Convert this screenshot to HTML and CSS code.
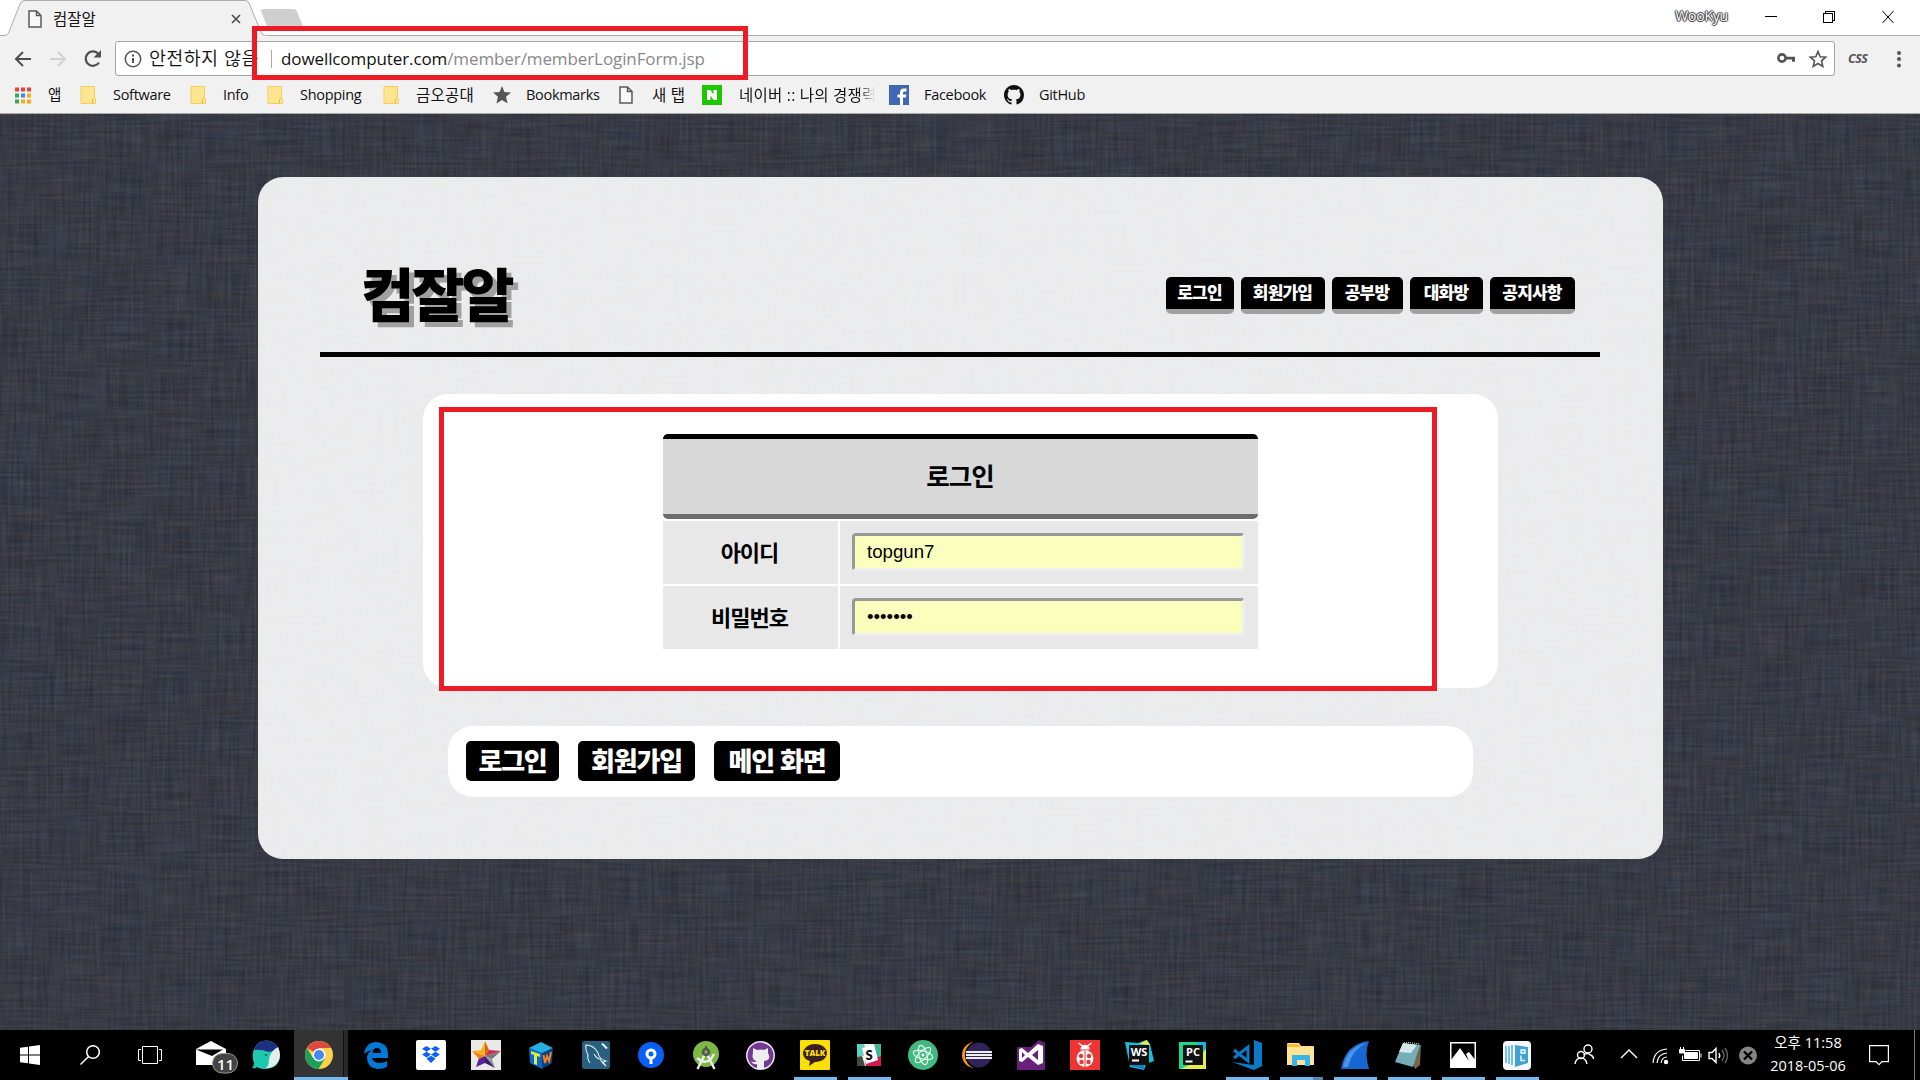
FILE: index.html
```html
<!DOCTYPE html>
<html lang="ko">
<head>
<meta charset="utf-8">
<title>컴잘알</title>
<link rel="stylesheet" href="styles.css">
</head>
<body>
<svg class="defs" width="0" height="0" aria-hidden="true">
  <symbol id="octocat" viewBox="0 0 16 16"><path d="M8 0C3.58 0 0 3.58 0 8c0 3.54 2.29 6.53 5.47 7.59.4.07.55-.17.55-.38 0-.19-.01-.82-.01-1.49-2.01.37-2.53-.49-2.69-.94-.09-.23-.48-.94-.82-1.13-.28-.15-.68-.52-.01-.53.63-.01 1.08.58 1.23.82.72 1.21 1.87.87 2.33.66.07-.52.28-.87.51-1.07-1.78-.2-3.64-.89-3.64-3.95 0-.87.31-1.59.82-2.15-.08-.2-.36-1.02.08-2.12 0 0 .67-.21 2.2.82.64-.18 1.32-.27 2-.27s1.36.09 2 .27c1.53-1.04 2.2-.82 2.2-.82.44 1.1.16 1.92.08 2.12.51.56.82 1.27.82 2.15 0 3.07-1.87 3.75-3.65 3.95.29.25.54.73.54 1.48 0 1.07-.01 1.93-.01 2.2 0 .21.15.46.55.38A8 8 0 0 0 16 8c0-4.42-3.58-8-8-8z"/></symbol>
  <symbol id="folder" viewBox="0 0 16 18"><path d="M1 .5h13.5v11.500l1 1v4.500H1z" fill="#ffe58f" stroke="#f3cf62"/><path d="M12.500 17.500v-4l1.500-1.500" fill="none" stroke="#e9b93a"/></symbol>
  <symbol id="doc" viewBox="0 0 14 18"><path d="M1 1h7.500L13 5.500V17H1zM8.500 1v4.500H13" fill="#fff" fill-opacity=".5" stroke="#5a5a5a" stroke-width="1.500"/></symbol>
</svg>

<header class="browser">
  <div class="tabs">
    <svg class="tab-shape" width="1920" height="36" viewBox="0 0 1920 36">
      <path d="M0 35.500H5Q8 35 9 32L20 4Q21 .5 25 .5H245Q248 .5 249 3L261 32Q262 35.500 266 35.500H1920V37H0z" fill="#f1f1f1" stroke="#acacac"/>
      <path d="M264 9H293Q296 9 297 11L303 27H270Q267 27 266 24L261 11Q261 9 264 9z" fill="#cfcfcf"/>
    </svg>
    <div class="tab">
      <svg width="14" height="18"><use href="#doc"/></svg>
      <span>컴잘알</span>
      <svg class="tab-close" width="10" height="10" viewBox="0 0 10 10"><path d="M1 1l8 8M9 1L1 9" stroke="#4c4c4c" stroke-width="1.700"/></svg>
    </div>
    <span class="profile">WooKyu</span>
    <svg class="win" width="130" height="14" viewBox="0 0 130 14" fill="none" stroke="#000" shape-rendering="crispEdges"><path d="M0 6.500h12M58.500 3.500h9v9h-9zM60.500 3V1.500h9v9H68"/><path d="M117.500 1l11 12M128.500 1l-11 12" shape-rendering="auto"/></svg>
  </div>
  <div class="toolbar">
    <svg class="nav-icons" width="90" height="20" viewBox="0 0 90 20" fill="none" stroke-width="2">
      <path d="M17 10H2M9 3L2 10l7 7" stroke="#4f4f4f"/>
      <path d="M36 10h15M44 3l7 7-7 7" stroke="#d2d2d2"/>
      <path d="M85 13.500A7.200 7.200 0 1 1 84 4.500" stroke="#4f4f4f" stroke-width="2.300"/><path d="M87 1v7.500h-7.500z" fill="#4f4f4f"/>
    </svg>
    <div class="address">
      <svg width="18" height="18" viewBox="0 0 18 18"><circle cx="9" cy="9" r="7.700" fill="none" stroke="#555" stroke-width="1.500"/><path d="M9 8v5M9 4.500v2" stroke="#555" stroke-width="2"/></svg>
      <span class="insecure">안전하지 않음</span>
      <i class="divider"></i>
      <span class="url">dowellcomputer.com<em>/member/memberLoginForm.jsp</em></span>
      <svg class="addr-icons" width="52" height="18" viewBox="0 0 52 18"><circle cx="6" cy="8" r="3.600" fill="none" stroke="#555" stroke-width="2.600"/><path d="M9 6.700h10v5h-3v-2.300H9z" fill="#555"/><path d="M42 1.500l2.200 5.200 5.500.5-4.200 3.700 1.300 5.500L42 13.500l-4.800 2.900 1.300-5.500-4.200-3.700 5.500-.5z" fill="none" stroke="#555" stroke-width="1.600"/></svg>
    </div>
    <span class="css-ext">CSS</span>
    <svg class="menu-dots" width="4" height="18" viewBox="0 0 4 18" fill="#555"><circle cx="2" cy="3" r="2"/><circle cx="2" cy="9" r="2"/><circle cx="2" cy="15.500" r="2"/></svg>
  </div>
  <nav class="bookmarks">
    <a><svg viewBox="0 0 16 16" width="16" height="17"><path fill="#e94436" d="M0 0h4v4H0zM6 0h4v4H6zM12 0h4v4h-4z"/><path fill="#3fa35d" d="M0 6h4v4H0zM0 12h4v4H0z"/><path fill="#3b86f7" d="M6 6h4v4H6z"/><path fill="#f7ad17" d="M12 6h4v4h-4zM6 12h4v4H6zM12 12h4v4h-4z"/></svg><span>앱</span></a>
    <a><svg width="16" height="18"><use href="#folder"/></svg><span>Software</span></a>
    <a><svg width="16" height="18"><use href="#folder"/></svg><span>Info</span></a>
    <a><svg width="16" height="18"><use href="#folder"/></svg><span>Shopping</span></a>
    <a><svg width="16" height="18"><use href="#folder"/></svg><span class="ko">금오공대</span></a>
    <a><svg width="18" height="18" viewBox="0 0 18 18"><path d="M9 0l2.400 6 6.600.5-5 4.300 1.600 6.700L9 13.900l-5.600 3.600L5 10.800 0 6.500 6.600 6z" fill="#555"/></svg><span>Bookmarks</span></a>
    <a><svg width="14" height="18"><use href="#doc"/></svg><span class="ko">새 탭</span></a>
    <a><svg width="20" height="20" viewBox="0 0 20 20"><rect width="20" height="20" fill="#1ec800"/><path d="M5 15V5h3.500l3 4.600V5H15v10h-3.500l-3-4.600V15z" fill="#fff"/></svg><span class="ko fade">네이버 :: 나의 경쟁력</span></a>
    <a><svg width="20" height="20" viewBox="0 0 20 20"><rect width="20" height="20" fill="#4267b2"/><path d="M11 20v-7.500H8.500V9.500H11V7.400Q11 3.500 15 3.500h2.500v3h-2Q14 6.500 14 8v1.500h3.400l-.5 3H14V20z" fill="#fff"/></svg><span>Facebook</span></a>
    <a><svg width="20" height="20" fill="#111"><use href="#octocat"/></svg><span>GitHub</span></a>
  </nav>
</header>

<main class="page">
  <svg class="linen" width="1920" height="916">
    <filter id="weave" x="0" y="0" width="100%" height="100%" color-interpolation-filters="sRGB">
      <feTurbulence type="fractalNoise" baseFrequency="0.02 0.35" numOctaves="2" seed="4"/>
      <feColorMatrix values=".17 0 .06 0 .09  .17 .02 0 0 .122  .17 0 -.06 0 .2  0 0 0 0 1" result="h"/>
      <feTurbulence type="fractalNoise" baseFrequency="0.35 0.02" numOctaves="2" seed="9"/>
      <feColorMatrix values=".17 0 .06 0 .09  .17 .02 0 0 .122  .17 0 -.06 0 .2  0 0 0 0 1" result="v"/>
      <feComposite in="h" in2="v" operator="arithmetic" k2=".53" k3=".53"/>
    </filter>
    <rect width="1920" height="916" filter="url(#weave)"/>
  </svg>
  <div class="card">
    <div class="site-head">
      <h1>컴잘알</h1>
      <nav class="menu"><a class="w68">로그인</a><a class="w84">회원가입</a><a class="w71">공부방</a><a class="w73">대화방</a><a class="w85">공지사항</a></nav>
    </div>
    <section class="panel">
      <div class="login">
        <div class="login-title">로그인</div>
        <label class="cell">아이디</label><div class="cell field"><input type="text" value="topgun7"></div>
        <label class="cell">비밀번호</label><div class="cell field"><input class="secret" type="text" value="•••••••"></div>
      </div>
    </section>
    <section class="actions"><button class="b1">로그인</button><button class="b2">회원가입</button><button class="b3">메인 화면</button></section>
  </div>
</main>

<footer class="taskbar">
  <div class="sys"><svg width="20" height="20" viewBox="0 0 20 20" fill="#fff"><path d="M0 2.800l8-1.100v7.800H0zM9 1.500L20 0v9.500H9zM0 10.500h8v7.800l-8-1.100zM9 10.500h11V20L9 18.500z"/></svg></div>
  <div class="sys"><svg width="20" height="20" viewBox="0 0 20 20" fill="none" stroke="#fff" stroke-width="1.500"><circle cx="13" cy="7" r="6.300"/><path d="M8.500 11.500L.5 19.500"/></svg></div>
  <div class="sys"><svg width="24" height="18" viewBox="0 0 24 18" fill="none" stroke="#fff"><path d="M4.500.5h15v17h-15zM3 3.500H.5v11H3M21 3.500h2.500v11H21"/></svg></div>
  <div class="app mail"><svg width="44" height="34" viewBox="0 0 44 34"><path d="M2 9L17 1l15 8v16H2z" fill="#fff"/><path d="M2 9.500h27L18 16z" fill="#000"/><rect x="18.500" y="13.500" width="25" height="19.500" rx="9.700" fill="#444" stroke="#999"/></svg><b>11</b></div>
  <div class="app whale"><svg width="30" height="30" viewBox="0 0 30 30"><path d="M2 12Q5 1 15 .5 27 1 29 14 29 28 15 29 9 29 6 27 4 29 1 28 3 26 3 23 1 18 2 12z" fill="#1cc9b0"/><path d="M3 10Q6 1 15 .5 23 1 27 7q-3 4-9 5-8-3-15-2z" fill="#1c2f83"/><path d="M27 7q4 9 0 15-4 6-12 6 3-3 3-8 1-9 9-13z" fill="#e4efed"/><circle cx="15" cy="15" r="1" fill="#153"/></svg></div>
  <div class="app on"><svg width="28" height="28" viewBox="0 0 28 28"><circle cx="14" cy="14" r="14" fill="#fdd04e"/><path d="M14 14L1.900 7A14 14 0 0 1 26.100 7H14z" fill="#dd4b3e"/><path d="M1.900 7A14 14 0 0 0 13.500 28L20 17.500 8 17z" fill="#1b9f5b"/><circle cx="14" cy="14" r="6.500" fill="#fff"/><circle cx="14" cy="14" r="5" fill="#4688f4"/></svg></div>
  <div class="app wide"><svg width="24" height="27" viewBox="0 0 24 27"><path d="M0 12Q2 0 12.500 0 24 1 24 12v4H8q1 5 8 5 4 0 7-2v6q-4 2-9 2-11-1-11-11 0-5 5-8-5 1-8 4zM8.500 11H17q0-5-4-5t-4.500 5z" fill="#0078d7"/></svg></div>
  <div class="app wide"><svg width="30" height="30" viewBox="0 0 30 30"><rect width="30" height="30" rx="2" fill="#fff"/><path d="M10.500 6L6 8.800l4.500 2.900L15 8.800zM19.500 6L15 8.800l4.500 2.900L24 8.800zM10.500 11.700L6 14.500l4.500 2.900 4.500-2.900zM19.500 11.700L15 14.500l4.500 2.900 4.500-2.900zM10.500 18.500L15 15.700l4.500 2.800L15 23z" fill="#0c62f5"/></svg></div>
  <div class="app wide"><svg width="30" height="30" viewBox="0 0 30 30"><rect width="30" height="30" fill="#ebe8e8"/><path d="M14 1v15L1 11l9-1z" fill="#f5b51a"/><path d="M14 1l4 9-4 6z" fill="#d8671c"/><path d="M18 10l12 1-16 5z" fill="#d52752"/><path d="M30 11l-9 8-7-3z" fill="#777"/><path d="M21 19l3 9-10-12z" fill="#999"/><path d="M14 16v7l-9 4 3-9z" fill="#56249a"/><path d="M14 16l10 12-10-5z" fill="#392261"/><path d="M1 11l13 5-6 3z" fill="#fa7e18"/></svg></div>
  <div class="app wide"><svg width="24" height="27" viewBox="0 0 24 27"><path d="M0 6L12 0l12 6-11 6z" fill="#25aee2"/><path d="M0 6l13 5v16L1 21z" fill="#0868c8"/><path d="M24 6l-11 5v16l10-6z" fill="#0a3f80"/><path d="M2 9l9 3v3l-3-1v9l-3-1v-9l-3-1z" fill="#d8ec42"/><path d="M14.500 13l1.500 8 2-7 2 5 2-9" fill="none" stroke="#ef8224" stroke-width="2"/></svg></div>
  <div class="app wide"><svg width="28" height="28" viewBox="0 0 28 28"><rect width="28" height="28" rx="2.500" fill="#28607f"/><path d="M8 22Q5 18 6 14 3 8 4 4q8 0 12 8 1 6 8 8l-3 1 3 4q-4-3-6-7-3 0-6-5" fill="none" stroke="#e7f0f5" stroke-width="1.100"/><path d="M20 2.500l5 5" stroke="#e7f0f5" stroke-width="2"/></svg></div>
  <div class="app wide"><svg width="26" height="26" viewBox="0 0 26 26"><circle cx="13" cy="13" r="13" fill="#0960f6"/><circle cx="13" cy="12" r="4" fill="none" stroke="#fff" stroke-width="3"/><path d="M11.500 15h3v7h-3z" fill="#fff"/></svg></div>
  <div class="app wide"><svg width="26" height="29" viewBox="0 0 26 29"><circle cx="13" cy="13" r="13" fill="#7db845"/><path d="M12 13L4.500 28M14 13l7.500 15M4 17q8 7 14 1l3-5" fill="none" stroke="#eee" stroke-width="2.400"/><circle cx="13" cy="11" r="3" fill="#7db845" stroke="#555" stroke-width="2.600"/><path d="M12 5h2v4h-2z" fill="#555"/></svg></div>
  <div class="app wide"><svg width="29" height="29" viewBox="0 0 29 29"><circle cx="14.500" cy="14.500" r="13.700" fill="#753694" stroke="#ece5f1" stroke-width="1.500"/><path d="M7 7l4 2q4-1 7 0l4-2v5q4 7-4 8v8h-7v-5q-4 1-6-3 3 2 6 0-6-1-4-8z" fill="#eee"/></svg></div>
  <div class="app run"><svg width="30" height="30" viewBox="0 0 30 30"><rect width="30" height="30" rx="1" fill="#fce100"/><path d="M15 4c7 0 12 4 12 9s-5 9-12 9l-6 4 1-5c-4-1-7-4-7-8s5-9 12-9z" fill="#3b1f20"/></svg><b class="talk">TALK</b></div>
  <div class="app run"><svg width="26" height="26" viewBox="0 0 26 26"><path d="M1 2h24v22H1z" fill="#eee"/><path d="M1 2h7l3 11-10 2z" fill="#60cfc0"/><path d="M18 2h7v13l-4 1z" fill="#3fb893"/><path d="M1 15l5-1 3 10H1z" fill="#414a42"/><path d="M9 19l16-5v10H10z" fill="#d5184b"/><path d="M6 6l12-3 4 15-12 4z" fill="#fff"/></svg><b class="slack">S</b></div>
  <div class="app"><svg width="30" height="30" viewBox="0 0 30 30"><circle cx="15" cy="15" r="15" fill="#40b983"/><g fill="none" stroke="#e2fbea" stroke-width="1.200"><ellipse cx="15" cy="15" rx="10" ry="4" transform="rotate(15 15 15)"/><ellipse cx="15" cy="15" rx="10" ry="4" transform="rotate(75 15 15)"/><ellipse cx="15" cy="15" rx="10" ry="4" transform="rotate(135 15 15)"/></g><circle cx="15" cy="15" r="1.500" fill="#fff"/></svg></div>
  <div class="app"><svg width="30" height="28" viewBox="0 0 30 28"><circle cx="13" cy="14" r="13" fill="#f7941e"/><circle cx="17" cy="14" r="14" fill="#000"/><circle cx="17" cy="14" r="12.500" fill="#2f2359"/><path d="M4 11h26M4 14h26M4 17h26" stroke="#eee" stroke-width="1.800"/></svg></div>
  <div class="app"><svg width="28" height="30" viewBox="0 0 28 30"><path d="M0 7h14L22 0l6 3v27H0z" fill="#68217a"/><path d="M2 9l3-1 6 5 10-9 5 2v17l-5 2-10-8-6 5-3-1zM5 12v6l3-3zM21 10l-6 5 6 5z" fill="#fff" fill-rule="evenodd"/></svg></div>
  <div class="app"><svg width="30" height="30" viewBox="0 0 30 30"><rect width="30" height="30" fill="#ef3434"/><path d="M8.500 3l4 3q2.500-1 5 0l4-3" fill="none" stroke="#fff" stroke-width="1.400"/><path d="M10.500 9.500q0-4.500 4.500-4.500t4.500 4.500z" fill="#fff"/><circle cx="15" cy="18.500" r="8.500" fill="#fff"/><g fill="#ef3434"><path d="M14.500 10h1v17h-1z"/><circle cx="11" cy="16" r="2.200"/><circle cx="19" cy="16" r="2.200"/><circle cx="11.500" cy="22" r="2.200"/><circle cx="18.500" cy="22" r="2.200"/></g></svg></div>
  <div class="app"><svg width="30" height="30" viewBox="0 0 30 30"><path d="M1 2l13 1 8-3 4 4 4 17-8 3-2 6-14-3z" fill="#12c2dc"/><path d="M15 4l8-4 3 5z" fill="#f0e94b"/><path d="M5 20h15v9L7 26z" fill="#137fc8"/><path d="M5 5h20v20H5z" fill="#111"/><path d="M8 20.500h7" stroke="#fff" stroke-width="2"/></svg><b class="ide">WS</b></div>
  <div class="app"><svg width="28" height="28" viewBox="0 0 28 28"><path d="M0 1h27v27H0z" fill="#21d789"/><path d="M17 1h10v10z" fill="#0fb6df"/><path d="M27 8v20H2l14-7z" fill="#e8ed4b"/><path d="M4 4h20v20H4z" fill="#111"/><path d="M6.500 20.500h7" stroke="#fff" stroke-width="2"/></svg><b class="ide">PC</b></div>
  <div class="app run"><svg width="30" height="30" viewBox="0 0 30 30"><path d="M22 0l8 3v23l-8 4L0 22l22 3z" fill="#0979c8"/><path d="M2 10l14 11V7L2 18" fill="none" stroke="#0979c8" stroke-width="3"/></svg></div>
  <div class="app run more"><svg width="28" height="24" viewBox="0 0 28 24"><path d="M0 1q0-1 1-1h11l2 3h12q1 0 1 1v18H0z" fill="#ffe397"/><path d="M0 1h12l1 3H0z" fill="#f6bf26"/><path d="M5 23V13q0-1 1-1h16q1 0 1 1v10h-5v-6h-8v6z" fill="#38b3e7"/></svg></div>
  <div class="app run"><svg width="30" height="28" viewBox="0 0 30 28"><path d="M1 28Q5 3 29 0 24 12 29 28z" fill="#1767d2"/><path d="M3 26Q7 6 26 2 12 9 8 26z" fill="#4a94e8"/></svg></div>
  <div class="app run"><svg width="28" height="27" viewBox="0 0 28 27"><path d="M9 2l17 1-1 20-5 4z" fill="#74664b"/><path d="M8 1l17 2-7 22L0 20z" fill="#75aeb9"/><path d="M8 1l14 2-6 8-12-1z" fill="#d4e8e9"/><path d="M9 0l16 2" stroke="#eee" stroke-dasharray="1 1"/></svg></div>
  <div class="app run"><svg width="26" height="26" viewBox="0 0 26 26"><path d="M.5.500h25v25H.5z" fill="#000" stroke="#fff" stroke-width="2"/><path d="M1 18L10 6l9 13-3-7 3-2 7 9v7H1z" fill="#fff"/></svg></div>
  <div class="app run"><svg width="28" height="29" viewBox="0 0 28 29"><rect width="28" height="29" rx="4" fill="#f5f8fa"/><path d="M3 5v17M6 5v18M9 4v20" stroke="#5db2dc" stroke-width="1.600"/><path d="M12 4l13 2v16l-13 4z" fill="#42a2d4"/><path d="M18 9h4v3h-4zM18 14.500v5h4" fill="none" stroke="#fff" stroke-width="1.300"/></svg></div>
  <div class="tray">
    <svg width="190" height="26" viewBox="0 0 190 26" fill="none" stroke="#fff" stroke-width="1.400">
      <circle cx="15" cy="7" r="4"/><path d="M10.500 13q4-3 7 0 3 1 3 4"/><circle cx="8" cy="13" r="3.500"/><path d="M2 22q1-6 6-6t6 6"/>
      <path d="M48 16l8-8 8 8"/>
      <path d="M80 21Q81 8 94 7M84 21q1-9 10-10M88 21q1-6 6-6" stroke-width="1.200"/><circle cx="93" cy="20" r="1.500" fill="#fff"/>
      <g stroke-width="1"><path d="M112.500 8.500h14v10h-17v-5M128 11.500v4"/><path d="M111.500 10.500h13v6h-13z" fill="#fff"/><path d="M107.500 5v3M110.500 5v3"/><path d="M106.500 7.500h5v3.500h-5z" fill="#fff"/></g>
      <path d="M136 10.500h3l4-4v14l-4-4h-3z"/><path d="M146 11q1.500 2.500 0 5"/><path d="M149 8q4 5.500 0 11M152 6q5 7.500 0 15" stroke="#666"/>
      <circle cx="175" cy="13.500" r="9" fill="#858585" stroke="none"/><path d="M171 9.500l8 8m0-8l-8 8" stroke="#000" stroke-width="2.400"/>
    </svg>
    <div class="clock"><span>오후 11:58</span><span class="date">2018-05-06</span></div>
    <svg class="notice" width="20" height="21" viewBox="0 0 20 21" fill="none" stroke="#fff" stroke-width="1.200"><path d="M.6.600h18.800v16H13l-3 3-3-3H.6z"/></svg>
  </div>
</footer>

<div class="mark mark-url"></div>
<div class="mark mark-form"></div>
</body>
</html>
```
FILE: styles.css
```css
* { box-sizing: border-box; }
body { margin: 0; width: 1920px; height: 1080px; overflow: hidden; position: relative; display: flex; flex-direction: column; font-family: "Open Sans", "Noto Sans CJK KR", sans-serif; color: #111; }
svg { display: block; flex: none; }
.defs { position: absolute; }

/* browser frame */
.browser { height: 114px; background: #f1f1f1; border-bottom: 1px solid #aaa; }
.tabs { position: relative; height: 36px; background: #fff; display: flex; align-items: center; }
.tab-shape { position: absolute; left: 0; top: 0; }
.tab { position: relative; display: flex; align-items: center; width: 220px; margin-left: 28px; padding-top: 1px; font: 400 15.500px "Noto Sans CJK KR", sans-serif; }
.tab span { margin-left: 11px; margin-top: -2px; }
.tab-close { margin-left: auto; margin-right: 7px; }
.profile { position: relative; margin-left: auto; margin-right: 37px; font-size: 14px; line-height: 20px; letter-spacing: -.2px; margin-top: -4px; color: #fff; text-shadow: 1px 0 1px #333, -1px 0 1px #333, 0 1px 1px #333, 0 -1px 1px #333; }
.win { position: relative; margin-right: 25px; margin-top: -3px; }
.toolbar { height: 44px; display: flex; align-items: center; padding: 1px 19px 0 14px; }
.nav-icons { margin-right: 11px; }
.address { width: 1720px; height: 35px; background: #fff; border: 1px solid #a5a5a5; border-radius: 3px; display: flex; align-items: center; padding: 0 6px 0 8px; }
.insecure { width: 113px; margin-left: 7px; font: 350 18.500px/28px "Noto Sans CJK KR", sans-serif; letter-spacing: .35px; white-space: nowrap; margin-top: -3px; }
.divider { width: 1px; height: 18px; background: #aaa; margin: 0 9px 0 9px; }
.url { font-size: 17px; letter-spacing: -.1px; }
.url em { font-style: normal; color: #888; }
.addr-icons { margin-left: auto; }
.css-ext { width: 22px; margin-left: 13px; font: italic bold 12.500px "Open Sans", sans-serif; letter-spacing: -.5px; color: #555; }
.menu-dots { margin-left: auto; }
.bookmarks { height: 30px; padding-left: 15px; display: grid; grid-template-columns: 65px 110px 77px 116px 110px 126px 83px 187px 115px 110px; align-items: center; font-size: 14.5px; }
.bookmarks a { display: flex; align-items: center; gap: 17px; white-space: nowrap; height: 28px; }
.bookmarks a:nth-child(6), .bookmarks a:nth-child(9), .bookmarks a:nth-child(10) { gap: 15px; }
.bookmarks a:nth-child(7) { gap: 19px; }
.bookmarks span { line-height: 20px; letter-spacing: -.3px; }
.bookmarks .ko { font-size: 15.500px; letter-spacing: .25px; }
.fade { width: 136px; overflow: hidden; -webkit-mask-image: linear-gradient(90deg, #000 88%, transparent); mask-image: linear-gradient(90deg, #000 88%, transparent); }

/* page */
.page { height: 916px; position: relative; background: #363a45; padding: 63px 0 0 258px; }
.linen { position: absolute; left: 0; top: 0; }
.card { position: relative; width: 1405px; height: 682px; border-radius: 25px; background: rgba(255,255,255,.9); padding: 62px 63px 0 62px; font-family: "Noto Sans CJK KR", sans-serif; font-weight: 900; color: #000; }
.site-head { height: 118px; border-bottom: 5px solid #000; display: flex; justify-content: space-between; padding: 0 25px 0 41px; }
h1 { margin: 11px 0 0; font-size: 58px; line-height: 85px; height: 85px; letter-spacing: -3.200px; font-weight: 900; text-shadow: 5px 5px 0 #a0a0a0; }
.menu { display: flex; gap: 7px; margin-top: 38px; }
.menu a { height: 37px; background: #000; color: #fff; border-bottom: 5px solid #a0a0a0; border-radius: 5px; font-size: 17px; line-height: 30px; letter-spacing: -.8px; text-align: center; padding-right: 1px; }
.w68 { width: 68px; } .w84 { width: 84px; } .w71 { width: 71px; } .w73 { width: 73px; } .w85 { width: 85px; }
.panel { width: 1075px; height: 294px; margin: 37px 0 0 103px; padding: 40px 240px 0; background: #fff; border-radius: 25px; }
.login { width: 595px; display: grid; grid-template-columns: 175px 418px; grid-template-rows: 85px 63px 63px; gap: 2px; }
.login-title { grid-column: 1 / 3; background: #d8d8d8; border-top: 5px solid #000; border-bottom: 5px solid #6c6c6c; border-radius: 5px; display: flex; align-items: center; justify-content: center; font-size: 25.500px; font-weight: 700; letter-spacing: -1px; padding: 0 1px 4px 0; }
.cell { background: #e8e8e8; display: flex; align-items: center; justify-content: center; font-size: 22px; font-weight: 700; letter-spacing: -1px; padding: 0 2px 4px 0; }
.field { padding: 0 13px 1px 12px; letter-spacing: 0; }
.field input { width: 393px; height: 38px; border: 3px solid; border-color: #999 #eee #eee #999; border-radius: 4px; background: #faffbd; padding: 0 12px 1px; font: 18.670px "Liberation Sans", sans-serif; color: #000; outline: 0; }
.actions { width: 1025px; height: 71px; margin: 38px 0 0 128px; padding: 15px 18px; background: #fff; border-radius: 25px; display: flex; }
.actions button { height: 40px; border: 0; border-radius: 5px; background: #000; color: #fff; padding: 0 0 3px; font: 900 26px/37px "Noto Sans CJK KR", sans-serif; letter-spacing: -1.200px; white-space: nowrap; }
.b1 { width: 93px; } .b2 { width: 117px; margin: 0 19px; } .b3 { width: 126px; }

/* taskbar */
.taskbar { height: 50px; background: #000; display: flex; color: #fff; }
.sys { width: 60px; display: flex; align-items: center; justify-content: center; }
.app { width: 54px; position: relative; display: flex; align-items: center; justify-content: center; }
.sys:nth-child(3) { margin-right: 6px; }
.wide { width: 55px; }
.whale svg { margin-left: -3px; }
.on { background: linear-gradient(90deg, #333 49px, #111 49px, #111 50px, #292929 50px); }
.on svg { margin-left: -5px; }
.run::after, .on::after { content: ""; position: absolute; left: 6px; bottom: 0; width: 43px; height: 3px; background: #76b9ed; }
.on::after { left: 0; width: 54px; }
.more::after { background: linear-gradient(90deg, #76b9ed 33px, #5587b0 33px); }
.mail { padding-top: 4px; }
.mail svg { margin-left: 6px; }
.mail b { position: absolute; left: 31px; top: 24px; font: 600 15px/20px "Open Sans", sans-serif; }
.app b { position: absolute; text-align: center; }
.talk { left: 12px; width: 30px; top: 18px; font: 800 8px/10px "Open Sans", sans-serif; color: #fce100; }
.slack { left: 12px; width: 30px; top: 16px; font: 800 13px/18px Lato, sans-serif; color: #111; }
.ide { left: 12px; width: 30px; top: 14px; font: 700 11px/16px "Open Sans", sans-serif; }
.tray { flex: 1; margin-left: 29px; border-right: 1px solid #777; margin-right: 5px; display: flex; align-items: center; }
.clock { width: 80px; margin-left: 5px; display: flex; flex-direction: column; align-items: center; font: 14.500px/22px "Open Sans", "Noto Sans CJK KR", sans-serif; white-space: nowrap; margin-top: -1px; }
.clock .date { margin-top: 1px; }
.notice { margin-left: 21px; }

/* highlight frames over the window */
.mark { position: absolute; border: 5px solid #ed1c24; }
.mark-url { left: 252px; top: 26px; width: 496px; height: 54px; }
.mark-form { left: 439px; top: 407px; width: 998px; height: 284px; }
```
